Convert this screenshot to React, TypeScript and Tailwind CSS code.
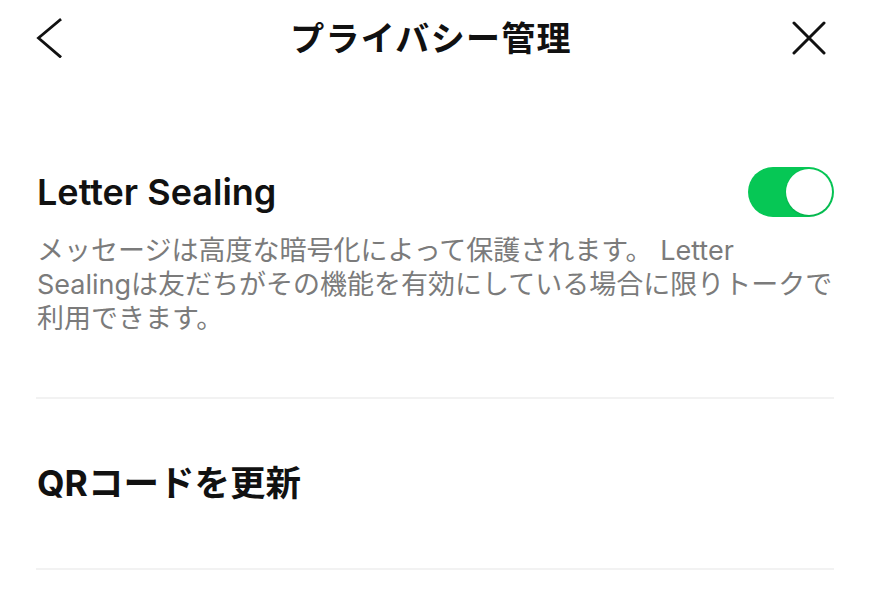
export default function App() {
  const font = { fontFamily: 'Inter, "Noto Sans CJK JP", sans-serif' };

  return (
    <div className="w-[870px] h-[597px] bg-white text-[#111] overflow-hidden" style={font}>
      {/* header */}
      <div className="grid grid-cols-[1fr_auto_1fr] items-center h-[76px] pl-[36px] pr-[44px]">
        <button className="justify-self-start">
          <svg width="26" height="40" viewBox="0 0 26 40" fill="none">
            <path d="M24 2 L2.5 20 L24 38.5" stroke="#111" strokeWidth="2.8" strokeLinecap="square" strokeLinejoin="miter" />
          </svg>
        </button>
        <h1 className="text-[34px] font-bold tracking-[1.3px]">プライバシー管理</h1>
        <button className="justify-self-end">
          <svg width="34" height="34" viewBox="0 0 34 34" fill="none">
            <path d="M2 2 L32 32 M32 2 L2 32" stroke="#111" strokeWidth="3" strokeLinecap="round" />
          </svg>
        </button>
      </div>

      <div className="px-[36px]">
        {/* Letter Sealing */}
        <div className="flex items-center justify-between h-[50px] mt-[91px]">
          <span className="text-[36px] font-semibold pl-px">Letter Sealing</span>
          <div className="w-[86px] h-[50px] rounded-full bg-[#06c755] p-[2px] flex justify-end">
            <div className="w-[46px] h-[46px] rounded-full bg-white shadow-[0_1px_2px_rgba(0,0,0,0.15)]" />
          </div>
        </div>
        <p className="mt-[17px] text-[27px] leading-[34px] text-[#7b7b7b] pl-px whitespace-nowrap">
          メッセージは高度な暗号化によって保護されます。 Letter
          <br />
          Sealingは友だちがその機能を有効にしている場合に限りトークで
          <br />
          利用できます。
        </p>
        <div className="mt-[61px] h-[2px] bg-[#f2f2f2]" />

        {/* QR */}
        <div className="h-[169px] flex items-center">
          <span className="text-[35.5px] font-bold pl-px">QRコードを更新</span>
        </div>
        <div className="h-[2px] bg-[#f2f2f2]" />
      </div>
    </div>
  );
}
